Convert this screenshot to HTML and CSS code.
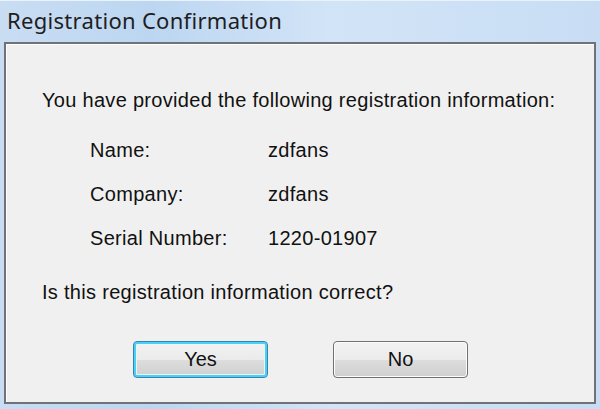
FILE: index.html
```html
<!DOCTYPE html>
<html lang="en">
<head>
    <meta charset="UTF-8">
    <title>Registration Confirmation</title>
    <link rel="stylesheet" href="styles.css">
</head>
<body>
    <div class="window">
        <div class="titlebar">Registration Confirmation</div>
        <div class="frame">
            <div class="panel">
                <p class="intro">You have provided the following registration information:</p>
                <div class="info">
                    <span class="label">Name:</span><span class="value">zdfans</span>
                    <span class="label">Company:</span><span class="value">zdfans</span>
                    <span class="label">Serial Number:</span><span class="value">1220-01907</span>
                </div>
                <p class="question">Is this registration information correct?</p>
                <div class="buttons">
                    <button class="btn default">Yes</button>
                    <button class="btn">No</button>
                </div>
            </div>
        </div>
    </div>
</body>
</html>
```

FILE: styles.css
```css
body {
    margin: 0;
    font-family: "Liberation Sans", Arial, sans-serif;
    background: #cfe2f6;
}
.window {
    width: 600px;
    height: 409px;
    display: flex;
    flex-direction: column;
    background: linear-gradient(90deg, #c9ddf3 0%, #bcd6f1 25%, #d2e4f7 55%, #c8ddf4 100%);
}
.titlebar {
    height: 42px;
    box-sizing: border-box;
    padding: 4px 0 0 7px;
    font-family: "Noto Sans", "Open Sans", sans-serif;
    font-size: 22px;
    letter-spacing: 0.3px;
    color: #1e1e1e;
    border-top: 1px solid #eaf3fc;
}
.frame {
    flex: 1;
    padding: 0 4px 5px 4px;
}
.panel {
    height: 100%;
    box-sizing: border-box;
    background: #f0f0f0;
    border: 2px solid #6f7378;
    box-shadow: inset 1px 1px 0 #ffffff;
    padding: 45px 0 0 36px;
    font-size: 20px;
    line-height: 23px;
    letter-spacing: 0.3px;
    color: #111;
}
.intro {
    margin: 0;
}
.info {
    display: grid;
    grid-template-columns: 178px auto;
    row-gap: 21px;
    margin: 27px 0 0 48px;
}
.question {
    margin: 31px 0 0;
}
.buttons {
    display: flex;
    gap: 65px;
    margin: 37px 0 0 91px;
}
.btn {
    width: 135px;
    height: 37px;
    font-family: "Liberation Sans", Arial, sans-serif;
    font-size: 20px;
    color: #111;
    border: 1px solid #707070;
    border-radius: 4px;
    background: linear-gradient(#f2f2f2 0%, #ebebeb 50%, #dddddd 51%, #cfcfcf 100%);
    box-shadow: inset 0 0 0 1px #fcfcfc;
}
.btn.default {
    border-color: #3c7fb1;
    box-shadow: inset 0 0 0 2px #48d0f5, inset 0 0 0 3px #e8f6fc;
}
```
